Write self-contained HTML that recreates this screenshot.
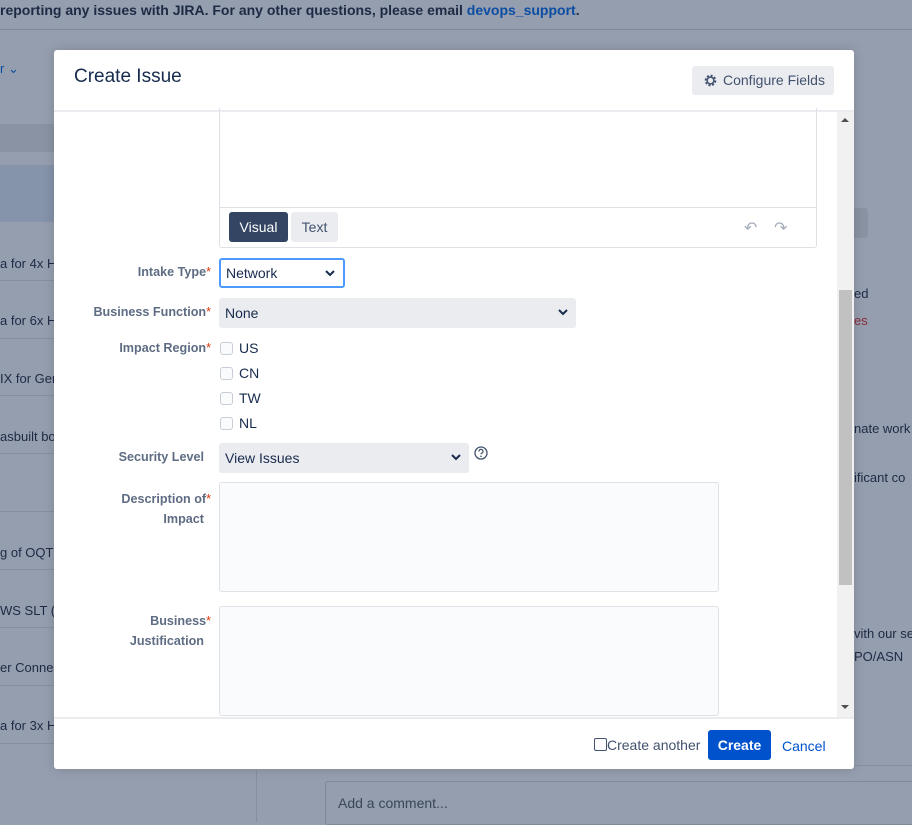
<!DOCTYPE html>
<html><head><style>
*{box-sizing:border-box;margin:0;padding:0}
body{width:912px;height:822px;overflow:hidden;background:#959eaf;font-family:"Liberation Sans",sans-serif;position:relative;color:#172b4d}
.abs{position:absolute}
.bgt{position:absolute;font-size:13px;color:#1d2a44;white-space:nowrap}
.row{position:absolute;left:0;width:60px;height:1px;background:#868fa0}
.lbl{position:absolute;font-size:12.6px;font-weight:bold;color:#5e6c84;text-align:right;white-space:nowrap}
.lbl b{color:#de350b;font-weight:normal}
.sel{position:absolute;background:#ebecf0;border-radius:3px;font-size:14px;color:#172b4d;padding-left:6px;line-height:30px;height:30px}
.chev{position:absolute;right:8px;top:11px}
.cb{position:absolute;width:13px;height:13px;border:1px solid #c9ced6;border-radius:3px;background:#fafbfc}
.cbt{position:absolute;font-size:14px;color:#172b4d}
.ta{position:absolute;background:#fafbfc;border:1px solid #dfe1e6;border-radius:3px}
</style></head><body>
<div class="abs" style="left:0;top:0;width:912px;height:29px;line-height:20px;font-size:14px;font-weight:bold;color:#1d2a44;white-space:nowrap">reporting any issues with JIRA. For any other questions, please email <span style="color:#0c4da2">devops_support</span>.</div>
<div class="abs" style="left:0;top:29px;width:912px;height:1px;background:#7f8899"></div>
<div class="bgt" style="left:0;top:61px;color:#0c4da2">r ⌄</div>
<div class="abs" style="left:0;top:124px;width:60px;height:28px;background:#8a93a3"></div>
<div class="abs" style="left:0;top:165px;width:60px;height:57px;background:#8593ab"></div>
<div class="bgt" style="left:0;top:256px">a for 4x H</div><div class="row" style="top:280px"></div>
<div class="bgt" style="left:0;top:313px">a for 6x H</div><div class="row" style="top:338px"></div>
<div class="bgt" style="left:0;top:371px">IX for Ger</div><div class="row" style="top:395px"></div>
<div class="bgt" style="left:0;top:429px">asbuilt bo</div><div class="row" style="top:453px"></div>
<div class="row" style="top:511px"></div>
<div class="bgt" style="left:0;top:545px">g of OQT</div><div class="row" style="top:569px"></div>
<div class="bgt" style="left:0;top:603px">WS SLT (</div><div class="row" style="top:627px"></div>
<div class="bgt" style="left:0;top:660px">er Conne</div><div class="row" style="top:685px"></div>
<div class="bgt" style="left:0;top:718px">a for 3x H</div><div class="row" style="top:743px"></div>
<div class="abs" style="left:256px;top:770px;width:1px;height:52px;background:#868fa0"></div>
<div class="abs" style="left:256px;top:765px;width:656px;height:1px;background:#868fa0"></div>
<div class="abs" style="left:325px;top:781px;width:600px;height:44px;border:1px solid #7f8899;border-radius:3px;background:#959eaf;font-size:14px;color:#3b4659;padding:13px 12px">Add a comment...</div>
<div class="abs" style="left:854px;top:208px;width:14px;height:30px;background:#8a93a3;border-radius:0 3px 3px 0"></div>
<div class="bgt" style="left:854px;top:286px">ed</div>
<div class="bgt" style="left:854px;top:313px;color:#8a2c3c">es</div>
<div class="bgt" style="left:854px;top:421px">nate work</div>
<div class="bgt" style="left:854px;top:470px">ificant co</div>
<div class="bgt" style="left:854px;top:626px">vith our se</div>
<div class="bgt" style="left:854px;top:649px">PO/ASN</div>

<div class="abs" style="left:54px;top:50px;width:800px;height:719px;background:#fff;border-radius:3px;box-shadow:0 0 12px rgba(0,0,0,.15);overflow:hidden">
 <div class="abs" style="left:20px;top:16px;font-size:19px;color:#172b4d">Create Issue</div>
 <div class="abs" style="left:638px;top:16px;width:142px;height:29px;background:#ebecf0;border-radius:3px;font-size:14px;color:#42526e;line-height:29px;padding-left:31px">Configure Fields
  <svg class="abs" style="left:11px;top:7px" width="15" height="15" viewBox="0 0 16 16"><circle cx="8" cy="8" r="5" fill="none" stroke="#42526e" stroke-width="2.4" stroke-dasharray="2.2 1.7"/><circle cx="8" cy="8" r="3.6" fill="none" stroke="#42526e" stroke-width="1.6"/></svg></div>
 <div class="abs" style="left:0;top:60px;width:800px;height:2px;background:#ebecf0"></div>
 <div class="abs" style="left:783px;top:62px;width:17px;height:605px;background:#f1f1f1"></div>
 <div class="abs" style="left:785px;top:240px;width:13px;height:295px;background:#c1c1c1"></div>
 <div class="abs" style="left:787px;top:68px;width:0;height:0;border:4px solid transparent;border-bottom-color:#505050;border-top:0"></div>
 <div class="abs" style="left:787px;top:655px;width:0;height:0;border:4px solid transparent;border-top-color:#505050;border-bottom:0"></div>
 <div class="abs" style="left:165px;top:58px;width:598px;height:140px;border:1px solid #dfe1e6;border-top:0;border-radius:0 0 3px 3px"></div>
 <div class="abs" style="left:165px;top:157px;width:598px;height:1px;background:#dfe1e6"></div>
 <div class="abs" style="left:175px;top:162px;width:59px;height:30px;background:#344563;border-radius:3px;color:#fff;font-size:14px;line-height:30px;text-align:center">Visual</div>
 <div class="abs" style="left:237px;top:162px;width:47px;height:30px;background:#ebecf0;border-radius:3px;color:#42526e;font-size:14px;line-height:30px;text-align:center">Text</div>
 <div class="abs" style="left:690px;top:168px;font-size:16px;color:#a5adba">↶</div>
 <div class="abs" style="left:720px;top:168px;font-size:16px;color:#a5adba">↷</div>
 <div class="lbl" style="left:0;width:157px;top:215px">Intake Type<b>*</b></div>
 <div class="abs" style="left:165px;top:208px;width:126px;height:30px;border:2px solid #4c9aff;border-radius:3px;font-size:14px;line-height:26px;padding-left:5px">Network
  <svg class="chev" style="top:10px;right:8px" width="10" height="7" viewBox="0 0 10 7"><path d="M1 1l4 4 4-4" fill="none" stroke="#172b4d" stroke-width="2"/></svg></div>
 <div class="lbl" style="left:0;width:157px;top:255px">Business Function<b>*</b></div>
 <div class="sel" style="left:165px;top:248px;width:357px">None<svg class="chev" width="10" height="7" viewBox="0 0 10 7"><path d="M1 1l4 4 4-4" fill="none" stroke="#172b4d" stroke-width="2"/></svg></div>
 <div class="lbl" style="left:0;width:157px;top:291px">Impact Region<b>*</b></div>
 <div class="cb" style="left:166px;top:292px"></div><div class="cbt" style="left:185px;top:290px">US</div>
 <div class="cb" style="left:166px;top:317px"></div><div class="cbt" style="left:185px;top:315px">CN</div>
 <div class="cb" style="left:166px;top:342px"></div><div class="cbt" style="left:185px;top:340px">TW</div>
 <div class="cb" style="left:166px;top:367px"></div><div class="cbt" style="left:185px;top:365px">NL</div>
 <div class="lbl" style="left:0;width:150px;top:400px">Security Level</div>
 <div class="sel" style="left:165px;top:393px;width:250px">View Issues<svg class="chev" width="10" height="7" viewBox="0 0 10 7"><path d="M1 1l4 4 4-4" fill="none" stroke="#172b4d" stroke-width="2"/></svg></div>
 <svg class="abs" style="left:420px;top:396px" width="14" height="14" viewBox="0 0 14 14"><circle cx="7" cy="7" r="6" fill="none" stroke="#42526e" stroke-width="1.3"/><path d="M5 5.5a2 2 0 1 1 2.5 1.8c-.4.2-.5.5-.5 1" fill="none" stroke="#42526e" stroke-width="1.3"/><circle cx="7" cy="10.3" r=".8" fill="#42526e"/></svg>
 <div class="lbl" style="left:0;width:157px;top:439px;line-height:20px">Description of<b>*</b><br><span style="padding-right:7px">Impact</span></div>
 <div class="ta" style="left:165px;top:432px;width:500px;height:110px"></div>
 <div class="lbl" style="left:0;width:157px;top:561px;line-height:20px">Business<b>*</b><br><span style="padding-right:7px">Justification</span></div>
 <div class="ta" style="left:165px;top:556px;width:500px;height:110px"></div>
 <div class="abs" style="left:0;top:667px;width:800px;height:2px;background:#ebecf0"></div>
 <div class="abs" style="left:540px;top:688px;width:13px;height:13px;border:1px solid #42526e;border-radius:2px"></div>
 <div class="abs" style="left:553px;top:687px;font-size:14px;color:#42526e">Create another</div>
 <div class="abs" style="left:654px;top:680px;width:63px;height:30px;background:#0052cc;border-radius:3px;color:#fff;font-weight:bold;font-size:14px;line-height:30px;text-align:center">Create</div>
 <div class="abs" style="left:728px;top:688px;font-size:14px;color:#0052cc">Cancel</div>
</div>
</body></html>
